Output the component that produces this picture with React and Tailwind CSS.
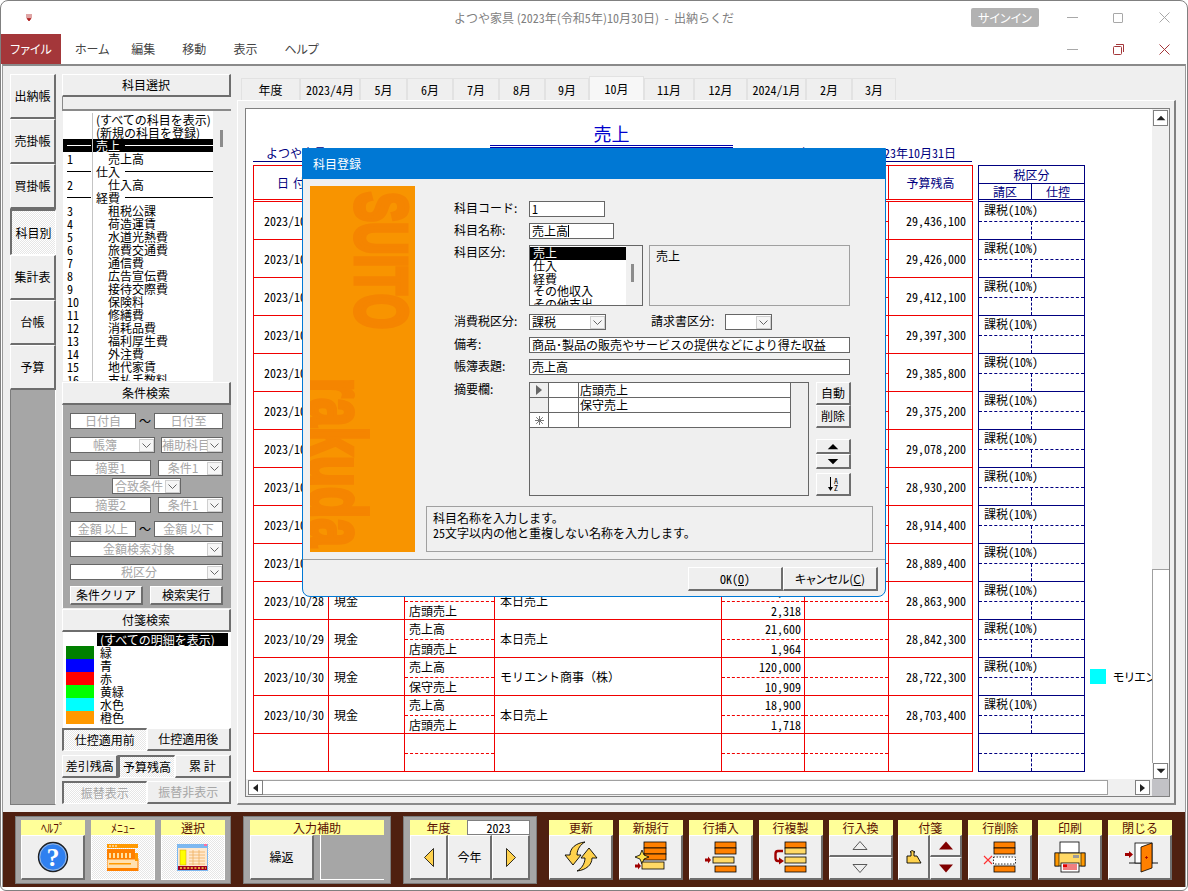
import React from "react";

const font = "font-['Noto_Sans_CJK_JP','Liberation_Sans',sans-serif]";
const hw = "[font-feature-settings:'hwid']";
const palt = "[font-feature-settings:'palt']";
const raised =
  "bg-[#efefef] border-t border-l border-t-white border-l-white border-r-2 border-b-2 border-r-[#6e6e6e] border-b-[#6e6e6e]";
const dither = "bg-[repeating-conic-gradient(#ffffff_0_25%,#e6e6e6_0_50%)] bg-[length:2px_2px]";
const sunken =
  "border-t-2 border-l-2 border-t-[#6e6e6e] border-l-[#6e6e6e] border-r border-b border-r-white border-b-white";
const center = "flex items-center justify-center";

const sideTabs = ["出納帳", "売掛帳", "買掛帳", "科目別", "集計表", "台帳", "予算"];

const monthTabs = [
  ["年度", 59],
  ["2023/4月", 60],
  ["5月", 47],
  ["6月", 46],
  ["7月", 46],
  ["8月", 46],
  ["9月", 44],
  ["10月", 55],
  ["11月", 50],
  ["12月", 53],
  ["2024/1月", 59],
  ["2月", 46],
  ["3月", 44],
];

const accounts = [
  { name: "(すべての科目を表示)" },
  { name: "(新規の科目を登録)" },
  { cat: "売上", sel: true },
  { num: "1", name: "売上高", sub: true },
  { cat: "仕入" },
  { num: "2", name: "仕入高", sub: true },
  { cat: "経費" },
  { num: "3", name: "租税公課", sub: true },
  { num: "4", name: "荷造運賃", sub: true },
  { num: "5", name: "水道光熱費", sub: true },
  { num: "6", name: "旅費交通費", sub: true },
  { num: "7", name: "通信費", sub: true },
  { num: "8", name: "広告宣伝費", sub: true },
  { num: "9", name: "接待交際費", sub: true },
  { num: "10", name: "保険料", sub: true },
  { num: "11", name: "修繕費", sub: true },
  { num: "12", name: "消耗品費", sub: true },
  { num: "13", name: "福利厚生費", sub: true },
  { num: "14", name: "外注費", sub: true },
  { num: "15", name: "地代家賃", sub: true },
  { num: "16", name: "支払手数料", sub: true },
];

const tags = [
  ["緑", "bg-[#008000]"],
  ["青", "bg-[#0000ff]"],
  ["赤", "bg-[#ff0000]"],
  ["黄緑", "bg-[#00ff00]"],
  ["水色", "bg-[#00ffff]"],
  ["橙色", "bg-[#ff9900]"],
];

const rows = [
  { date: "2023/10/18", bal: "29,436,100" },
  { date: "2023/10/19", bal: "29,426,000" },
  { date: "2023/10/20", bal: "29,412,100" },
  { date: "2023/10/21", bal: "29,397,300" },
  { date: "2023/10/22", bal: "29,385,800" },
  { date: "2023/10/23", bal: "29,375,200" },
  { date: "2023/10/24", bal: "29,078,200" },
  { date: "2023/10/25", bal: "28,930,200" },
  { date: "2023/10/26", bal: "28,914,400" },
  { date: "2023/10/27", bal: "28,889,400" },
  { date: "2023/10/28", acc: "現金", a: "売上高", b: "店頭売上", memo: "本日売上", x: "25,500", y: "2,318", bal: "28,863,900" },
  { date: "2023/10/29", acc: "現金", a: "売上高", b: "店頭売上", memo: "本日売上", x: "21,600", y: "1,964", bal: "28,842,300" },
  { date: "2023/10/30", acc: "現金", a: "売上高", b: "保守売上", memo: "モリエント商事（株）", x: "120,000", y: "10,909", bal: "28,722,300" },
  { date: "2023/10/30", acc: "現金", a: "売上高", b: "店頭売上", memo: "本日売上", x: "18,900", y: "1,718", bal: "28,703,400" },
  {},
];

const toolButtons = [
  ["更新", <RefreshIcon />],
  ["新規行", <NewRowIcon />],
  ["行挿入", <InsertRowIcon />],
  ["行複製", <CopyRowIcon />],
];

const Bar = ({ x, y, w, h, fill = "#ff8000" }) => (
  <rect x={x} y={y} width={w} height={h} fill={fill} stroke="#000" strokeWidth="0.8" />
);

const Icon = ({ children }) => (
  <svg width="60" height="43" viewBox="0 0 60 43" className="block">
    {children}
  </svg>
);

function RefreshIcon() {
  const d = "M20 0 C11 1 5 6 5 13 L0 13 L8 23 L16 13 L12 13 C12 7 16 2 20 0 Z";
  return (
    <Icon>
      <g transform="translate(14 6)" fill="#ffd24d" stroke="#000" strokeWidth="0.9">
        <path d={d} />
        <path d={d} transform="rotate(180 16 14.5)" />
      </g>
    </Icon>
  );
}

function NewRowIcon() {
  return (
    <Icon>
      <Bar x={24} y={6} w={22} h={6} />
      <Bar x={24} y={12} w={22} h={6} />
      <Bar x={24} y={18} w={22} h={6} />
      <path d="M22 14 L24 19 L29 21 L24 23 L22 28 L20 23 L15 21 L20 19 Z" fill="#ffe14d" stroke="#000" strokeWidth="0.8" />
      <Bar x={22} y={26} w={22} h={7} fill="#ffd966" />
      <path d="M15 28.5 H18 V26.5 L21 30 L18 33.5 V31.5 H15 Z" fill="#a00000" />
    </Icon>
  );
}

function InsertRowIcon() {
  return (
    <Icon>
      <Bar x={25} y={6} w={21} h={6} />
      <Bar x={25} y={12} w={21} h={6} />
      <Bar x={23} y={21} w={21} h={6} fill="#ffd966" />
      <Bar x={25} y={30} w={21} h={6} />
      <path d="M15 22.5 H18 V20.5 L21 24 L18 27.5 V25.5 H15 Z" fill="#a00000" />
    </Icon>
  );
}

function CopyRowIcon() {
  return (
    <Icon>
      <Bar x={25} y={6} w={21} h={6} />
      <Bar x={25} y={12} w={21} h={6} fill="#ffd966" />
      <Bar x={25} y={21} w={21} h={6} fill="#ffd966" />
      <Bar x={25} y={30} w={21} h={6} />
      <path d="M23 15 H18 Q15.5 15 15.5 18 V22 Q15.5 25 18 25 H20" fill="none" stroke="#a00000" strokeWidth="2.4" />
      <path d="M19 21.5 L24 25 L19 28.5 Z" fill="#a00000" />
    </Icon>
  );
}

function DeleteRowIcon() {
  return (
    <Icon>
      <Bar x={24} y={6} w={21} h={6} />
      <Bar x={24} y={12} w={21} h={6} />
      <rect x="23.5" y="21" width="22" height="7" fill="#fff" stroke="#000" strokeWidth="0.8" strokeDasharray="1.5 1.5" />
      <Bar x={24} y={30} w={21} h={6} />
      <path d="M14 20 L22 28 M22 20 L14 28" stroke="#ff3030" strokeWidth="1.1" />
    </Icon>
  );
}

function PrintIcon() {
  return (
    <Icon>
      <rect x="20" y="6" width="19" height="11" fill="#fff" stroke="#000" strokeWidth="0.8" />
      <rect x="15" y="17" width="30" height="13" fill="#ffd966" stroke="#000" strokeWidth="0.8" />
      <rect x="15" y="17" width="4" height="13" fill="#ff9900" stroke="#000" strokeWidth="0.6" />
      <rect x="41" y="17" width="4" height="13" fill="#ff9900" stroke="#000" strokeWidth="0.6" />
      <rect x="33" y="19" width="6" height="3" fill="#9a9a9a" />
      <rect x="21" y="27" width="18" height="9" fill="#fff" stroke="#000" strokeWidth="0.8" />
      <path d="M23 29 H37 M23 31 H37 M23 33 H37" stroke="#e00000" strokeWidth="1" />
      <rect x="23" y="28.5" width="4" height="2.5" fill="#e00000" />
    </Icon>
  );
}

function CloseIcon() {
  return (
    <Icon>
      <path d="M19 27 H48" stroke="#000" strokeWidth="0.9" />
      <rect x="25" y="7" width="17" height="20" fill="#fff" stroke="#000" strokeWidth="0.8" />
      <path d="M42 7 L31 11 V36 L42 32 Z" fill="#ff8000" stroke="#000" strokeWidth="0.8" />
      <path d="M35 21.5 H38 M36.5 20 V23" stroke="#a00000" strokeWidth="0.8" />
      <path d="M15 17 H19 V15 L23 18.5 L19 22 V20 H15 Z" fill="#a00000" />
    </Icon>
  );
}

function HelpIcon() {
  return (
    <svg width="60" height="43" viewBox="0 0 60 43" className="block">
      <circle cx="30" cy="21" r="14.5" fill="#2f80f0" stroke="#222" strokeWidth="1.4" />
      <circle cx="30" cy="21" r="13.2" fill="none" stroke="#b9c7d8" strokeWidth="0.8" />
      <text x="30" y="30" textAnchor="middle" fontSize="26" fontWeight="700" fontFamily="Liberation Serif" fill="#fff">
        ?
      </text>
    </svg>
  );
}

function MenuIcon() {
  return (
    <svg width="32" height="27" viewBox="0 0 32 27" className="block">
      <rect x="0" y="0" width="31" height="4" fill="#ff9900" />
      <path d="M2 2 H4 M5 2 H7 M8 2 H10" stroke="#fff" />
      <rect x="0" y="5" width="28" height="10" fill="#ff8000" />
      <path d="M3 9 V14 M7 9 V14 M11 9 V14 M15 9 V14 M19 9 V14 M23 9 V14" stroke="#ffe0a0" strokeWidth="2" />
      <rect x="0" y="15" width="31" height="12" fill="#ffe0b0" stroke="#ff8000" />
      <rect x="2" y="19" width="22" height="1.5" fill="#ff9900" />
      <rect x="28" y="9" width="3" height="8" fill="#ff9900" />
      <rect x="0" y="24" width="31" height="3" fill="#ff8000" />
    </svg>
  );
}

function SelectIcon() {
  return (
    <svg width="32" height="27" viewBox="0 0 32 27" className="block">
      <rect x="0.5" y="0.5" width="30" height="26" fill="#ffe8cc" stroke="#7db8f0" />
      <rect x="1" y="1" width="29" height="3" fill="#7db8f0" />
      <rect x="27" y="0" width="3" height="2" fill="#ff70a0" />
      <rect x="3" y="6" width="6" height="15" fill="#ffff00" stroke="#d0a000" strokeWidth="0.5" />
      <path d="M12 8 H28 M12 11 H28 M12 14 H28 M12 17 H28 M12 20 H28 M16 6 V21 M22 6 V21" stroke="#f0b060" strokeWidth="0.8" />
      <rect x="1" y="22" width="29" height="4" fill="#a00020" />
      <path d="M3 24 H29" stroke="#ffe040" strokeWidth="1.6" strokeDasharray="2 1.6" />
    </svg>
  );
}

const Triangle = ({ d, fill = "#800000", stroke = "none", w = 16, h = 9 }) => (
  <svg width={w} height={h} viewBox="0 0 16 9" className="block">
    <path d={d} fill={fill} stroke={stroke} strokeWidth="0.8" />
  </svg>
);

const Chevron = () => (
  <span className={`${center} w-[15px] h-[13px] shrink-0 bg-[#f6f6f6] border border-[#cfcfcf] ml-auto`}>
    <svg width="9" height="5" viewBox="0 0 9 5">
      <path d="M0.5 0.5 L4.5 4.5 L8.5 0.5" fill="none" stroke="#666" />
    </svg>
  </span>
);

const Field = ({ w, text, combo, className = "" }) => (
  <div className={`flex items-center h-[16px] bg-white border border-[#666] overflow-hidden text-[#a6a6a6] leading-[14px] ${w} ${className}`}>
    <span className="flex-1 text-center whitespace-nowrap overflow-hidden">{text}</span>
    {combo && <Chevron />}
  </div>
);

const Input = ({ w, children, className = "" }) => (
  <div className={`h-[16px] bg-white border border-[#666] pl-[2px] leading-[14px] whitespace-nowrap overflow-hidden ${w} ${className}`}>
    {children}
  </div>
);

const FormRow = ({ label, className = "", h = "h-[16px]", children }) => (
  <div className={`flex ${h} ${className}`}>
    <span className="w-[75px] shrink-0 leading-[14px]">{label}</span>
    {children}
  </div>
);

const Head = ({ children }) => (
  <div className={`${raised} ${center} h-[23px] pb-px leading-none`}>{children}</div>
);

const ToolGroup = ({ label, w, children, plain }) => (
  <div className={`flex flex-col ${w}`}>
    <div className={`${center} h-[15px] bg-[#ffff99] text-[#5a1000] leading-none`}>{label}</div>
    <div className={`${center} h-[45px] ${plain ? `border border-white ${dither}` : raised}`}>{children}</div>
  </div>
);

export default function App() {
  return (
    <div className={`${font} text-[12px] text-black relative w-[1188px] h-[891px] bg-white border border-[#808080] rounded-t-[8px] rounded-b-[6px] overflow-hidden flex flex-col`}>
      {/* title bar */}
      <div className="grid grid-cols-[1fr_auto_1fr] items-center h-[33px] shrink-0">
        <div className="pl-[24px]">
          <svg width="12" height="8" viewBox="0 0 12 8">
            <path d="M1 1 H7 M1 3 H7 M2 4.5 H6 L4 7 Z" stroke="#b02020" fill="#b02020" strokeWidth="0.8" />
          </svg>
        </div>
        <div className="text-[#808080] whitespace-pre">
          よつや家具 (<span className={hw}>2023</span>年(令和<span className={hw}>5</span>年)<span className={hw}>10</span>月<span className={hw}>30</span>日)  -  出納らくだ
        </div>
        <div className="flex items-center justify-end">
          <div className={`${center} ${palt} w-[68px] h-[19px] rounded-[2px] bg-[#b2b2b2] text-white mr-[10px]`}>サインイン</div>
          <div className={`${center} w-[46px]`}>
            <span className="block w-[11px] h-px bg-[#a8a8a8]" />
          </div>
          <div className={`${center} w-[46px]`}>
            <span className="block w-[10px] h-[10px] border border-[#a8a8a8] rounded-[1px]" />
          </div>
          <div className={`${center} w-[46px]`}>
            <svg width="11" height="11" viewBox="0 0 11 11">
              <path d="M0.5 0.5 L10.5 10.5 M10.5 0.5 L0.5 10.5" stroke="#a8a8a8" />
            </svg>
          </div>
        </div>
      </div>

      {/* ribbon tabs */}
      <div className="flex items-stretch h-[30px] shrink-0">
        <div className={`${center} ${palt} w-[60px] bg-[#a4373a] text-white`}>ファイル</div>
        <div className={`flex items-center flex-1 ${palt} text-[#444]`}>
          <span className="ml-[14px]">ホーム</span>
          <span className="ml-[22px]">編集</span>
          <span className="ml-[27px]">移動</span>
          <span className="ml-[27px]">表示</span>
          <span className="ml-[27px]">ヘルプ</span>
        </div>
        <div className="flex items-center">
          <div className={`${center} w-[46px]`}>
            <span className="block w-[11px] h-px bg-[#a8a8a8]" />
          </div>
          <div className={`${center} w-[46px]`}>
            <svg width="11" height="11" viewBox="0 0 11 11">
              <rect x="0.5" y="2.5" width="8" height="8" rx="1" fill="none" stroke="#a4373a" />
              <path d="M3 0.5 H10.5 V8" fill="none" stroke="#a4373a" />
            </svg>
          </div>
          <div className={`${center} w-[46px]`}>
            <svg width="11" height="11" viewBox="0 0 11 11">
              <path d="M0.5 0.5 L10.5 10.5 M10.5 0.5 L0.5 10.5" stroke="#a4373a" />
            </svg>
          </div>
        </div>
      </div>

      <div className="flex flex-col mx-px border-x border-x-[#9a9a9a] border-t-2 border-t-[#8a8a8a] h-[823px] shrink-0">
        {/* main area */}
        <div className="flex h-[746px] shrink-0 bg-[#efefef] pt-[8px] pb-[7px] pl-[7px] pr-[9px]">
          {/* side tabs */}
          <div className="flex flex-col w-[46px] shrink-0">
            {sideTabs.map((t) =>
              t === "科目別" ? (
                <div key={t} className={`${center} ${sunken} ${dither} h-[46px] shrink-0`}>
                  {t}
                </div>
              ) : (
                <div key={t} className={`${center} ${raised} h-[45px] shrink-0`}>
                  {t}
                </div>
              )
            )}
            <div className="flex-1 bg-[#a6a6a6] border-l border-l-[#7c7c7c] border-r border-r-white border-b border-b-[#7c7c7c]" />
          </div>

          {/* select column */}
          <div className="flex flex-col w-[169px] shrink-0 ml-[6px]">
            <Head>科目選択</Head>
            <div className="h-[14px] shrink-0 border-b-2 border-b-[#8a8a8a] border-l border-l-[#8a8a8a]" />
            <div className="flex h-[270px] shrink-0">
              <div className="w-[150px] bg-white ml-px overflow-hidden pt-[2px]">
                {accounts.map((a, i) => (
                  <div key={i} className={`flex h-[13px] leading-[13px] whitespace-nowrap ${a.sel ? "bg-black text-white" : ""}`}>
                    <div className={`${hw} ${center} justify-start w-[30px] pl-[4px] shrink-0 border-r border-r-[#c4c4c4]`}>
                      {a.cat && <span className={`block w-[24px] h-px ${a.sel ? "bg-white" : "bg-black"}`} />}
                      {a.num}
                    </div>
                    {a.cat ? (
                      <div className="flex items-center flex-1 pl-[3px] min-w-0">
                        <span>{a.cat}</span>
                        <span className={`block flex-1 h-px ml-[5px] ${a.sel ? "bg-white" : "bg-black"}`} />
                      </div>
                    ) : (
                      <span className={a.sub ? "pl-[15px]" : "pl-[3px]"}>{a.name}</span>
                    )}
                  </div>
                ))}
              </div>
              <div className="flex-1 pt-[19px] pl-[7px]">
                <div className="w-[3px] h-[17px] bg-[#8c8c8c]" />
              </div>
            </div>
            <div className="h-px shrink-0" />
            <Head>条件検索</Head>
            <div className="flex flex-col h-[203px] shrink-0 bg-[#a6a6a6] pt-[7px] pl-[7px] border-l border-white">
              <div className="flex items-center">
                <Field w="w-[66px]" text="日付自" />
                <span className={`${center} w-[18px]`}>～</span>
                <Field w="w-[69px]" text="日付至" />
              </div>
              <div className="flex mt-[7px]">
                <Field w="w-[85px]" text="帳簿" combo />
                <Field w="w-[62px]" text="補助科目" combo className="ml-[6px]" />
              </div>
              <div className="flex mt-[7px]">
                <Field w="w-[81px]" text="摘要1" />
                <Field w="w-[65px]" text="条件1" combo className="ml-[7px]" />
              </div>
              <Field w="w-[69px]" text="合致条件" combo className="mt-[2px] ml-[42px]" />
              <div className="flex mt-[3px]">
                <Field w="w-[81px]" text="摘要2" />
                <Field w="w-[65px]" text="条件1" combo className="ml-[7px]" />
              </div>
              <div className="flex items-center mt-[7px]">
                <Field w="w-[66px]" text="金額 以上" />
                <span className={`${center} w-[18px]`}>～</span>
                <Field w="w-[69px]" text="金額 以下" />
              </div>
              <Field w="w-[153px]" text="金額検索対象" combo className="mt-[3px]" />
              <Field w="w-[153px]" text="税区分" combo className="mt-[7px]" />
              <div className="flex mt-[6px]">
                <div className={`${raised} ${center} w-[73px] h-[19px]`}>条件クリア</div>
                <div className={`${raised} ${center} w-[73px] h-[19px] ml-[7px]`}>検索実行</div>
              </div>
            </div>
            <div className="h-px shrink-0" />
            <Head>付箋検索</Head>
            <div className="flex flex-col h-[96px] shrink-0 bg-white ml-px pt-px pl-[3px]">
              <div className="flex h-[13px] leading-[13px]">
                <span className="w-[31px] shrink-0" />
                <span className="flex-1 mr-[3px] bg-black text-white pl-[3px] whitespace-nowrap">(すべての明細を表示)</span>
              </div>
              {tags.map(([name, color]) => (
                <div key={name} className="flex h-[13px] leading-[13px]">
                  <span className={`w-[28px] shrink-0 ${color}`} />
                  <span className="pl-[6px]">{name}</span>
                </div>
              ))}
            </div>
            <div className="flex h-[23px] shrink-0">
              <div className={`${center} ${sunken} ${dither} flex-1`}>仕控適用前</div>
              <div className={`${center} ${raised} flex-1`}>仕控適用後</div>
            </div>
            <div className="flex h-[23px] shrink-0 mt-[4px]">
              <div className={`${center} ${raised} flex-1`}>差引残高</div>
              <div className={`${center} ${sunken} ${dither} flex-1`}>予算残高</div>
              <div className={`${center} ${raised} flex-1`}>累 計</div>
            </div>
            <div className="flex h-[23px] shrink-0 mt-[3px] text-[#a6a6a6]">
              <div className={`${center} ${sunken} ${dither} flex-1`}>振替表示</div>
              <div className={`${center} ${raised} flex-1`}>振替非表示</div>
            </div>
          </div>

          {/* report column */}
          <div className="flex flex-col flex-1 min-w-0 ml-[6px] pt-[4px]">
            <div className="flex h-[22px] shrink-0 pl-[4px]">
              {monthTabs.map(([t, w]) => (
                <div
                  key={t}
                  style={{ width: w }}
                  className={`${center} ${hw} border border-[#e2e2e2] border-b-0 ${t === "10月" ? "bg-[#f7f7f7] -mt-[2px] mb-0 h-[24px]" : ""}`}
                >
                  {t}
                </div>
              ))}
            </div>
            <div className="flex-1 min-h-0 flex border-l border-t border-l-white border-t-white border-r-2 border-b-2 border-r-[#808080] border-b-[#8a8a8a] pt-[7px] pl-[7px] pr-[4px] pb-[6px]">
              <div className="flex flex-col flex-1 min-w-0 bg-white border border-[#808080]">
                <div className="flex flex-1 min-h-0">
                  <div className="flex-1 min-w-0 overflow-hidden pl-[7px]">
                    <div className="w-[243px] ml-[237px] mt-[15px] h-[24px] text-center text-[18px] leading-[19px] text-[#0000cc] border-b-[3px] border-double border-b-[#0000aa]">
                      売上
                    </div>
                    <div className="flex justify-between w-[719px] h-[17px] -mt-[3px] border-b border-b-[#000080] text-[#000080] leading-[16px] pl-[13px] pr-[16px]">
                      <span>よつや家具</span>
                      <span className={hw}>2023年10月1日 ～ 2023年10月31日</span>
                    </div>
                    <div className="flex mt-[3px]">
                      {/* ledger */}
                      <div className="w-[720px] shrink-0 border-l border-t border-[#f00000]">
                        <div className="grid grid-cols-[75px_76px_90px_227px_83px_84px_84px] h-[36px] border-b-[3px] border-double border-b-[#f00000] text-[#000080]">
                          <div className={`${center} gap-[4px] border-r border-[#f00000]`}>
                            <span>日</span>
                            <span>付</span>
                          </div>
                          <div className="border-r border-[#f00000]" />
                          <div className="border-r border-[#f00000]" />
                          <div className="border-r border-[#f00000]" />
                          <div className="border-r border-[#f00000]" />
                          <div className="border-r border-[#f00000]" />
                          <div className={`${center} border-r border-[#f00000]`}>予算残高</div>
                        </div>
                        {rows.map((r, i) => (
                          <div key={i} className="grid grid-cols-[75px_76px_90px_227px_83px_84px_84px] h-[38px] border-b border-b-[#f00000]">
                            <div className={`${hw} flex items-center pl-[10px] border-r border-[#f00000]`}>{r.date}</div>
                            <div className="flex items-center pl-[5px] border-r border-[#f00000]">{r.acc}</div>
                            <div className="flex flex-col border-r border-[#f00000]">
                              <div className="h-[20px] pl-[4px] leading-[18px] border-b border-dashed border-b-[#f00000]">{r.a}</div>
                              <div className="pl-[4px] leading-[17px]">{r.b}</div>
                            </div>
                            <div className="flex items-center pl-[5px] border-r border-[#f00000]">{r.memo}</div>
                            <div className={`${hw} flex flex-col text-right border-r border-[#f00000]`}>
                              <div className="h-[20px] pr-[3px] leading-[18px] border-b border-dashed border-b-[#f00000]">{r.x}</div>
                              <div className="pr-[3px] leading-[17px]">{r.y}</div>
                            </div>
                            <div className="flex flex-col border-r border-[#f00000]">
                              <div className="h-[20px] border-b border-dashed border-b-[#f00000]" />
                            </div>
                            <div className={`${hw} flex items-center justify-end pr-[6px] border-r border-[#f00000]`}>{r.bal}</div>
                          </div>
                        ))}
                      </div>

                      {/* tax columns */}
                      <div className="w-[107px] shrink-0 ml-[5px] border-l border-t border-[#000080]">
                        <div className="h-[36px] border-b-[3px] border-double border-b-[#000080] border-r border-r-[#000080] text-[#000080]">
                          <div className={`${center} h-[18px] border-b border-b-[#000080]`}>税区分</div>
                          <div className="flex h-[15px]">
                            <div className={`${center} w-[53px] border-r border-r-[#000080]`}>請区</div>
                            <div className={`${center} flex-1`}>仕控</div>
                          </div>
                        </div>
                        {rows.map((r, i) => (
                          <div key={i} className="flex flex-col h-[38px] border-b border-b-[#000080] border-r border-r-[#000080]">
                            <div className={`${hw} h-[20px] pl-[5px] leading-[15px] border-b border-dashed border-b-[#000080]`}>
                              {r.bal ? "課税(10%)" : ""}
                            </div>
                            <div className="w-[53px] flex-1 border-r border-dashed border-r-[#000080]" />
                          </div>
                        ))}
                      </div>

                      <div className="flex items-start shrink-0 ml-[5px] pt-[504px] whitespace-nowrap leading-[15px]">
                        <span className="block w-[16px] h-[15px] bg-[#00ffff]" />
                        <span className={`ml-[7px] ${palt}`}>モリエント商事（株）</span>
                      </div>
                    </div>
                  </div>

                  {/* vertical scrollbar */}
                  <div className="flex flex-col w-[17px] shrink-0 bg-[#f0f0f0] pt-px">
                    <div className={`${center} w-[15px] h-[16px] ml-px bg-white border border-[#808080]`}>
                      <Triangle d="M8 1 L15 8 H1 Z" fill="#222" w={10} h={6} />
                    </div>
                    <div className="flex-1" />
                    <div className="h-[194px] bg-white border-l border-t border-[#a0a0a0]" />
                    <div className={`${center} w-[15px] h-[16px] ml-px bg-white border border-[#808080]`}>
                      <Triangle d="M8 8 L15 1 H1 Z" fill="#222" w={10} h={6} />
                    </div>
                  </div>
                </div>

                {/* horizontal scrollbar */}
                <div className="flex items-stretch h-[17px] shrink-0 bg-[#f0f0f0]">
                  <div className="flex flex-1 items-center pl-[2px]">
                    <div className={`${center} w-[15px] h-[15px] bg-white border border-[#808080]`}>
                      <svg width="5" height="8" viewBox="0 0 5 8">
                        <path d="M5 0 V8 L0 4 Z" fill="#222" />
                      </svg>
                    </div>
                    <div className="w-[845px] h-[15px] bg-white border-y border-r border-[#a0a0a0]" />
                    <div className="flex-1" />
                    <div className={`${center} w-[15px] h-[15px] bg-white border border-[#808080] mr-[2px]`}>
                      <svg width="5" height="8" viewBox="0 0 5 8">
                        <path d="M0 0 V8 L5 4 Z" fill="#222" />
                      </svg>
                    </div>
                  </div>
                  <div className="w-[17px] bg-[#c2c2c6]" />
                </div>
              </div>
            </div>
          </div>
        </div>

        {/* bottom toolbar */}
        <div className="flex items-start h-[75px] shrink-0 bg-[#4f2010] pt-[4px] pl-[12px]">
          <div className="flex gap-[6px] h-[68px] bg-[#a6a6a6] border border-[#7c7c7c] pt-[3px] px-[5px]">
            <ToolGroup label="ﾍﾙﾌﾟ" w="w-[64px]">
              <HelpIcon />
            </ToolGroup>
            <ToolGroup label="ﾒﾆｭｰ" w="w-[64px]" plain>
              <MenuIcon />
            </ToolGroup>
            <ToolGroup label="選択" w="w-[64px]" plain>
              <SelectIcon />
            </ToolGroup>
          </div>

          <div className="flex flex-col w-[148px] h-[68px] ml-[12px] bg-[#a6a6a6] border border-[#7c7c7c] pt-[3px] px-[6px]">
            <div className={`${center} h-[15px] bg-[#ffff99] text-[#5a1000] leading-none`}>入力補助</div>
            <div className="flex h-[45px] gap-[6px]">
              <div className={`${center} ${raised} w-[64px]`}>繰返</div>
              <div className="flex-1 border-l border-b border-white" />
            </div>
          </div>

          <div className="flex flex-col w-[134px] h-[68px] ml-[12px] bg-[#a6a6a6] border border-[#7c7c7c] pt-[3px] px-[6px]">
            <div className="flex h-[15px]">
              <div className={`${center} w-[57px] bg-[#ffff99] text-[#5a1000] leading-none`}>年度</div>
              <div className={`${center} ${hw} flex-1 bg-white border border-[#808080] leading-none`}>2023</div>
            </div>
            <div className="flex h-[45px]">
              <div className={`${center} ${raised} w-[38px]`}>
                <svg width="10" height="19" viewBox="0 0 10 19">
                  <path d="M9.5 0.5 V18.5 L0.5 9.5 Z" fill="#ffd24d" stroke="#000" strokeWidth="0.8" />
                </svg>
              </div>
              <div className={`${center} ${raised} w-[44px]`}>今年</div>
              <div className={`${center} ${raised} flex-1`}>
                <svg width="10" height="19" viewBox="0 0 10 19">
                  <path d="M0.5 0.5 V18.5 L9.5 9.5 Z" fill="#ffd24d" stroke="#000" strokeWidth="0.8" />
                </svg>
              </div>
            </div>
          </div>

          <div className="flex gap-[5.875px] ml-[12px] pt-[4px]">
            {toolButtons.map(([label, icon]) => (
              <ToolGroup key={label} label={label} w="w-[64px]">
                {icon}
              </ToolGroup>
            ))}
            <div className="flex flex-col w-[64px]">
              <div className={`${center} h-[15px] bg-[#ffff99] text-[#5a1000] leading-none`}>行入換</div>
              <div className={`${center} ${raised} h-[22px]`}>
                <Triangle d="M8 0.5 L15 8.5 H1 Z" fill="#efefef" stroke="#333" />
              </div>
              <div className={`${center} ${raised} h-[23px]`}>
                <Triangle d="M8 8.5 L15 0.5 H1 Z" fill="#efefef" stroke="#333" />
              </div>
            </div>
            <div className="flex flex-col w-[64px]">
              <div className={`${center} h-[15px] bg-[#ffff99] text-[#5a1000] leading-none`}>付箋</div>
              <div className="flex h-[45px]">
                <div className={`${center} ${raised} w-[32px]`}>
                  <svg width="16" height="14" viewBox="0 0 16 14">
                    <path d="M1 6 H5 V2 H4 L6 0.5 L9 2 H8 V6 H11 L15 13 H1 Z" fill="#ffd24d" stroke="#000" strokeWidth="0.9" />
                  </svg>
                </div>
                <div className="flex flex-col flex-1">
                  <div className={`${center} ${raised} h-[22px]`}>
                    <Triangle d="M8 0.5 L15 8.5 H1 Z" />
                  </div>
                  <div className={`${center} ${raised} h-[23px]`}>
                    <Triangle d="M8 8.5 L15 0.5 H1 Z" />
                  </div>
                </div>
              </div>
            </div>
            <ToolGroup label="行削除" w="w-[64px]">
              <DeleteRowIcon />
            </ToolGroup>
            <ToolGroup label="印刷" w="w-[64px]">
              <PrintIcon />
            </ToolGroup>
            <ToolGroup label="閉じる" w="w-[64px]">
              <CloseIcon />
            </ToolGroup>
          </div>
        </div>
      </div>

      {/* modal dialog */}
      <div className="absolute left-[301px] top-[147px] w-[584px] h-[449px] flex flex-col bg-[#f0f0f0] border border-[#0078d4] rounded-b-[8px] overflow-hidden">
        <div className="flex items-center h-[30px] shrink-0 bg-[#0078d4] pl-[10px] text-white">科目登録</div>
        <div className="flex h-[380px] shrink-0 pt-[7px] pl-[7px]">
          <svg width="105" height="366" viewBox="0 0 105 366" className="block shrink-0">
            <rect width="105" height="366" fill="#f89400" />
            <g fill="#f58500" stroke="#f58500" fontFamily="Liberation Sans" fontWeight="700">
              <text transform="translate(46 6) rotate(90)" fontSize="72" textLength="137" lengthAdjust="spacingAndGlyphs" strokeWidth="5">
                SUITO
              </text>
              <text transform="translate(0 192) rotate(90)" fontSize="80" textLength="169" lengthAdjust="spacingAndGlyphs" strokeWidth="4">
                rakuda
              </text>
            </g>
          </svg>
          <div className="flex flex-col w-[447px] ml-[11px] pt-[15px]">
            <div className="flex flex-col pl-[28px]">
              <FormRow label="科目コード:">
                <Input w="w-[76px]"><span className={hw}>1</span></Input>
              </FormRow>
              <FormRow label="科目名称:" className="mt-[6px]">
                <Input w="w-[85px]">売上高<span className="inline-block w-px h-[12px] bg-black align-[-1px]" /></Input>
              </FormRow>
              <FormRow label="科目区分:" h="h-[61px]" className="mt-[6px]">
                <div className="flex w-[114px] h-[61px] bg-white border border-[#666] overflow-hidden">
                  <div className="flex-1 leading-[12.5px] min-w-0 pt-px">
                    <div className="bg-black text-white pl-[3px] h-[13px]">売上</div>
                    <div className="pl-[3px]">仕入</div>
                    <div className="pl-[3px]">経費</div>
                    <div className="pl-[3px]">その他収入</div>
                    <div className="pl-[3px]">その他支出</div>
                  </div>
                  <div className="w-[16px] shrink-0 bg-[#f0f0f0] pt-[18px] pl-[5px]">
                    <div className="w-[3px] h-[18px] bg-[#8c8c8c]" />
                  </div>
                </div>
                <div className="w-[201px] h-[61px] ml-[6px] border border-[#a0a0a0] pl-[6px] pt-[3px] leading-[14px]">売上</div>
              </FormRow>
              <FormRow label="消費税区分:" className="mt-[8px]">
                <Input w="w-[77px]" className="flex items-center pr-0">
                  課税<Chevron />
                </Input>
                <span className="ml-[45px] w-[74px] leading-[14px]">請求書区分:</span>
                <Input w="w-[47px]" className="flex items-center pr-0"><Chevron /></Input>
              </FormRow>
              <FormRow label="備考:" className="mt-[7px]">
                <Input w="w-[321px]">商品･製品の販売やサービスの提供などにより得た収益</Input>
              </FormRow>
              <FormRow label="帳簿表題:" className="mt-[6px]">
                <Input w="w-[321px]">売上高</Input>
              </FormRow>
              <FormRow label="摘要欄:" h="h-[114px]" className="mt-[7px]">
                <div className="w-[280px] h-[114px] border border-[#666] bg-[#efefef]">
                  {["店頭売上", "保守売上", ""].map((t, i) => (
                    <div key={i} className="flex h-[15px] w-[261px] border-b border-[#666]">
                      <div className={`${center} w-[19px] shrink-0 border-r border-[#666] ${i === 2 ? "bg-white" : "bg-[#efefef]"}`}>
                        {i === 0 && (
                          <svg width="6" height="10" viewBox="0 0 6 10">
                            <path d="M0 0 L6 5 L0 10 Z" fill="#666" />
                          </svg>
                        )}
                        {i === 2 && (
                          <svg width="9" height="9" viewBox="0 0 9 9">
                            <path d="M4.5 0 V9 M0 4.5 H9 M1.2 1.2 L7.8 7.8 M7.8 1.2 L1.2 7.8" stroke="#777" strokeWidth="1" />
                          </svg>
                        )}
                      </div>
                      <div className="w-[30px] shrink-0 bg-white border-r border-[#666]" />
                      <div className="flex-1 bg-white pl-px border-r border-[#666] leading-[13px]">{t}</div>
                    </div>
                  ))}
                </div>
                <div className="flex flex-col w-[35px] ml-[7px]">
                  <div className={`${center} ${raised} h-[23px]`}>自動</div>
                  <div className={`${center} ${raised} h-[23px]`}>削除</div>
                  <div className={`${center} ${raised} h-[15px] mt-[11px]`}>
                    <Triangle d="M8 1 L15 8 H1 Z" fill="#000" w={12} h={7} />
                  </div>
                  <div className={`${center} ${raised} h-[15px]`}>
                    <Triangle d="M8 8 L15 1 H1 Z" fill="#000" w={12} h={7} />
                  </div>
                  <div className={`${center} ${raised} h-[23px] mt-[4px] gap-[1px]`}>
                    <svg width="5" height="14" viewBox="0 0 5 14">
                      <path d="M2.5 0 V12" stroke="#000" />
                      <path d="M0 10 H5 L2.5 14 Z" fill="#000" />
                    </svg>
                    <span className={`${hw} flex flex-col text-[8px] leading-[7px]`}>
                      <span>A</span>
                      <span>Z</span>
                    </span>
                  </div>
                </div>
              </FormRow>
            </div>
            <div className="h-[46px] mt-[10px] border border-[#a0a0a0] pl-[6px] pt-[3px] leading-[15px]">
              <div>科目名称を入力します。</div>
              <div><span className={hw}>25</span>文字以内の他と重複しない名称を入力します。</div>
            </div>
          </div>
        </div>
        <div className="flex justify-end flex-1 border-t border-t-[#a0a0a0] pt-[7px] pr-[7px]">
          <div className={`${center} ${raised} w-[95px] h-[24px]`}>
            <span className={hw}>OK(<u>O</u>)</span>
          </div>
          <div className={`${center} ${raised} ${palt} w-[95px] h-[24px]`}>
            キャンセル(<u>C</u>)
          </div>
        </div>
      </div>
    </div>
  );
}
